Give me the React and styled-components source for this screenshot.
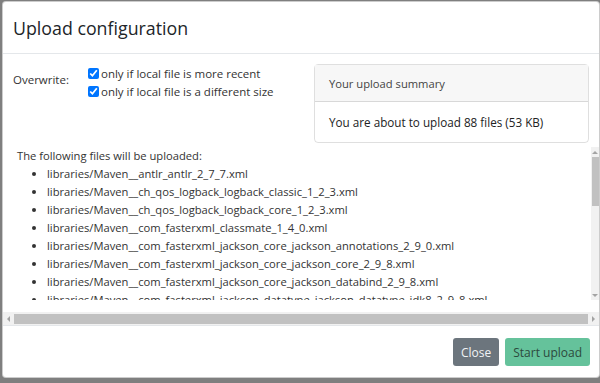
import React from "react";
import styled, { createGlobalStyle, css } from "styled-components";

const GlobalStyle = createGlobalStyle`
  html, body {
    margin: 0;
    background: #7f7f7f;
    font-family: "Open Sans", "Noto Sans", sans-serif;
    color: #212529;
    overflow: hidden;
  }
`;

const Backdrop = styled.div`
  height: 383px;
  padding: 1px 0 0 2px;
  box-sizing: border-box;
`;

const Modal = styled.div`
  width: 598px;
  height: 377px;
  box-sizing: border-box;
  background: #fff;
  border: 1px solid rgba(0, 0, 0, 0.2);
  border-radius: 4px;
  display: flex;
  flex-direction: column;
  overflow: hidden;
`;

const Header = styled.div`
  height: 51px;
  flex-shrink: 0;
  padding: 0 10px;
  display: flex;
  align-items: center;
  border-bottom: 1px solid #e4e7ea;
`;

const Title = styled.h5`
  margin: 0;
  font-size: 17.8px;
  font-weight: 500;
  color: #212529;
`;

const Top = styled.div`
  display: flex;
  align-items: flex-start;
  padding: 10px 10px 4px 10px;
`;

const Options = styled.div`
  display: flex;
  font-size: 11.5px;
  color: #333;
`;

const OptLabel = styled.div`
  width: 73px;
  margin-top: 7px;
  line-height: 18px;
`;

const Checks = styled.div`
  display: flex;
  flex-direction: column;
`;

const CheckRow = styled.label`
  display: flex;
  align-items: center;
  height: 18px;
  gap: 2px;

  input {
    margin: 0 0 0 2px;
    width: 11px;
    height: 11px;
    accent-color: #0075ff;
  }
`;

const Card = styled.div`
  margin-left: auto;
  width: 275px;
  box-sizing: border-box;
  border: 1px solid rgba(0, 0, 0, 0.125);
  border-radius: 4px;
`;

const CardHeader = styled.div`
  height: 36px;
  padding: 0 14px;
  display: flex;
  align-items: center;
  background: #f7f7f7;
  border-bottom: 1px solid rgba(0, 0, 0, 0.125);
  color: #444;
  font-size: 11.2px;
`;

const CardBody = styled.div`
  height: 40px;
  padding: 0 14px;
  display: flex;
  align-items: center;
  color: #222;
  font-size: 11.7px;
  font-weight: 500;
`;

const FileArea = styled.div`
  height: 178px;
  flex-shrink: 0;
  display: flex;
  flex-direction: column;
`;

const FileRow = styled.div`
  height: 165px;
  display: flex;
  align-items: flex-start;
`;

const FileBox = styled.div`
  flex: 1;
  height: 153px;
  overflow: hidden;
  padding-left: 14px;
  font-size: 11.2px;
  line-height: 18px;
  color: #333;
  white-space: nowrap;
`;

const FileList = styled.ul`
  margin: 0;
  padding-left: 30px;
`;

const VBar = styled.div`
  width: 8px;
  height: 153px;
  background: #f1f1f1;
  display: flex;
  flex-direction: column;
  align-items: center;
`;

const VThumb = styled.div`
  width: 7px;
  height: 49px;
  background: #c1c1c1;
`;

const HBar = styled.div`
  height: 13px;
  background: #f1f1f1;
  display: flex;
  align-items: center;
`;

const HThumb = styled.div`
  flex: 1;
  height: 10px;
  background: #c1c1c1;
`;

const ArrowCell = styled.div`
  flex-shrink: 0;
  display: flex;
  align-items: center;
  justify-content: center;
  ${(p) =>
    p.$dir === "up" || p.$dir === "down"
      ? css`
          width: 8px;
          height: 10px;
        `
      : css`
          width: 11px;
          height: 13px;
        `}
  margin-top: ${(p) => (p.$dir === "down" ? "auto" : "0")};
`;

const Tri = styled.span`
  width: 0;
  height: 0;
  border: 3px solid transparent;
  ${(p) => p.$dir === "up" && css`border-bottom-color: #a3a3a3; border-top-width: 0;`}
  ${(p) => p.$dir === "down" && css`border-top-color: #a3a3a3; border-bottom-width: 0;`}
  ${(p) => p.$dir === "left" && css`border-right-color: #a3a3a3; border-left-width: 0;`}
  ${(p) => p.$dir === "right" && css`border-left-color: #a3a3a3; border-right-width: 0;`}
`;

const Arrow = ({ dir }) => (
  <ArrowCell $dir={dir}>
    <Tri $dir={dir} />
  </ArrowCell>
);

const Footer = styled.div`
  margin-top: auto;
  border-top: 1px solid #e4e7ea;
  padding: 12px 9px 11px;
  display: flex;
  justify-content: flex-end;
  gap: 6px;
`;

const Button = styled.button`
  height: 28px;
  padding: 0 8px;
  border: 0;
  border-radius: 3px;
  font-family: inherit;
  font-size: 12px;
  background: ${(p) => (p.$variant === "success" ? "#65c29b" : "#6c757d")};
  color: ${(p) => (p.$variant === "success" ? "#2c4a3d" : "#f1f3f5")};
`;

const files = [
  "antlr_antlr_2_7_7",
  "ch_qos_logback_logback_classic_1_2_3",
  "ch_qos_logback_logback_core_1_2_3",
  "com_fasterxml_classmate_1_4_0",
  "com_fasterxml_jackson_core_jackson_annotations_2_9_0",
  "com_fasterxml_jackson_core_jackson_core_2_9_8",
  "com_fasterxml_jackson_core_jackson_databind_2_9_8",
  "com_fasterxml_jackson_datatype_jackson_datatype_jdk8_2_9_8",
  "com_fasterxml_jackson_datatype_jackson_datatype_jsr310_2_9_8",
  "com_h2database_h2_1_4_197",
  "com_zaxxer_HikariCP_3_2_0",
];

export default function App() {
  return (
    <>
      <GlobalStyle />
      <Backdrop>
        <Modal>
          <Header>
            <Title>Upload configuration</Title>
          </Header>
          <Top>
            <Options>
              <OptLabel>Overwrite:</OptLabel>
              <Checks>
                <CheckRow>
                  <input type="checkbox" defaultChecked />
                  only if local file is more recent
                </CheckRow>
                <CheckRow>
                  <input type="checkbox" defaultChecked />
                  only if local file is a different size
                </CheckRow>
              </Checks>
            </Options>
            <Card>
              <CardHeader>Your upload summary</CardHeader>
              <CardBody>You are about to upload 88 files (53 KB)</CardBody>
            </Card>
          </Top>
          <FileArea>
            <FileRow>
              <FileBox>
                The following files will be uploaded:
                <FileList>
                  {files.map((f) => (
                    <li key={f}>libraries/Maven__{f}.xml</li>
                  ))}
                </FileList>
              </FileBox>
              <VBar>
                <Arrow dir="up" />
                <VThumb />
                <Arrow dir="down" />
              </VBar>
            </FileRow>
            <HBar>
              <Arrow dir="left" />
              <HThumb />
              <Arrow dir="right" />
            </HBar>
          </FileArea>
          <Footer>
            <Button>Close</Button>
            <Button $variant="success">Start upload</Button>
          </Footer>
        </Modal>
      </Backdrop>
    </>
  );
}
